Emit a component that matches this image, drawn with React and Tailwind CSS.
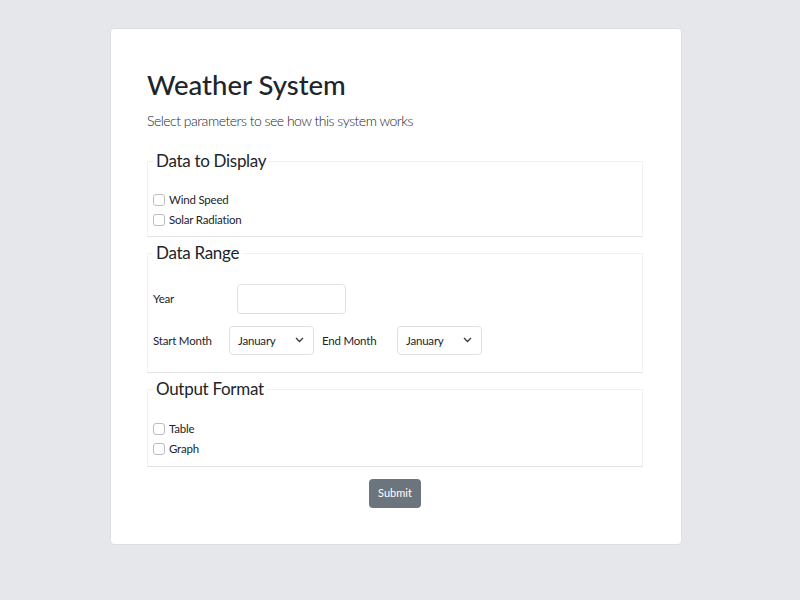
import { useState } from 'react';

const months = [
  'January', 'February', 'March', 'April', 'May', 'June',
  'July', 'August', 'September', 'October', 'November', 'December',
];

function Check({ label }) {
  const [checked, setChecked] = useState(false);
  return (
    <label className="flex items-center h-[20px] text-[11.5px] tracking-[-0.2px] text-[#212529]">
      <input
        type="checkbox"
        checked={checked}
        onChange={() => setChecked(!checked)}
        className="appearance-none w-[12px] h-[12px] border border-[#b9bec4] rounded-[3px] bg-white mr-[4px]"
      />
      {label}
    </label>
  );
}

function Group({ title, children, className }) {
  return (
    <fieldset className={`border border-[#f1f1f1] border-b-[#e1e4e7] px-[5px] ${className}`}>
      <legend className="px-[3px] text-[17px] tracking-[-0.3px] leading-[22px] text-[#212529]">{title}</legend>
      {children}
    </fieldset>
  );
}

function MonthSelect() {
  return (
    <div className="relative">
      <select className="appearance-none h-[29px] w-[85px] border border-[#dee2e6] rounded-[4px] bg-white pl-[8px] text-[11.5px] tracking-[-0.2px] text-[#212529]">
        {months.map((m) => (
          <option key={m}>{m}</option>
        ))}
      </select>
      <svg
        className="absolute right-[10px] top-[11px] pointer-events-none"
        width="9"
        height="6"
        viewBox="0 0 9 6"
        fill="none"
        stroke="#343a40"
        strokeWidth="1.3"
      >
        <path d="M1 1l3.5 3.5L8 1" />
      </svg>
    </div>
  );
}

export default function App() {
  return (
    <div
      className="min-h-[600px] bg-[#e5e7ea] pt-[28px]"
      style={{ fontFamily: 'Lato, Roboto, sans-serif' }}
    >
      <div className="w-[572px] h-[517px] bg-white rounded-[4px] border border-[#dcdfe3] ml-[110px] pl-[36px] pr-[38px] pt-[38px]">
        <h1 className="text-[27.5px] leading-[36px] font-medium text-[#212529]">Weather System</h1>
        <p className="mt-[7px] text-[14px] leading-[22px] tracking-[-0.5px] font-light text-[#212529]">
          Select parameters to see how this system works
        </p>

        <Group title="Data to Display" className="mt-[18px] h-[87px]">
          <div className="pt-[18px]">
            <Check label="Wind Speed" />
            <Check label="Solar Radiation" />
          </div>
        </Group>

        <Group title="Data Range" className="mt-[5px] h-[131px]">
          <div className="pt-[20px] text-[11.5px] tracking-[-0.2px] text-[#212529]">
            <div className="flex items-center">
              <span className="w-[84px]">Year</span>
              <input className="h-[30px] w-[109px] border border-[#dee2e6] rounded-[4px]" />
            </div>
            <div className="flex items-center mt-[12px]">
              <span className="w-[76px]">Start Month</span>
              <MonthSelect />
              <span className="ml-[8px] w-[75px]">End Month</span>
              <MonthSelect />
            </div>
          </div>
        </Group>

        <Group title="Output Format" className="mt-[5px] h-[89px]">
          <div className="pt-[19px]">
            <Check label="Table" />
            <Check label="Graph" />
          </div>
        </Group>

        <div className="flex justify-center mt-[12px]">
          <button className="h-[29px] px-[9px] bg-[#6c757d] text-white text-[11px] rounded-[4px]">
            Submit
          </button>
        </div>
      </div>
    </div>
  );
}
